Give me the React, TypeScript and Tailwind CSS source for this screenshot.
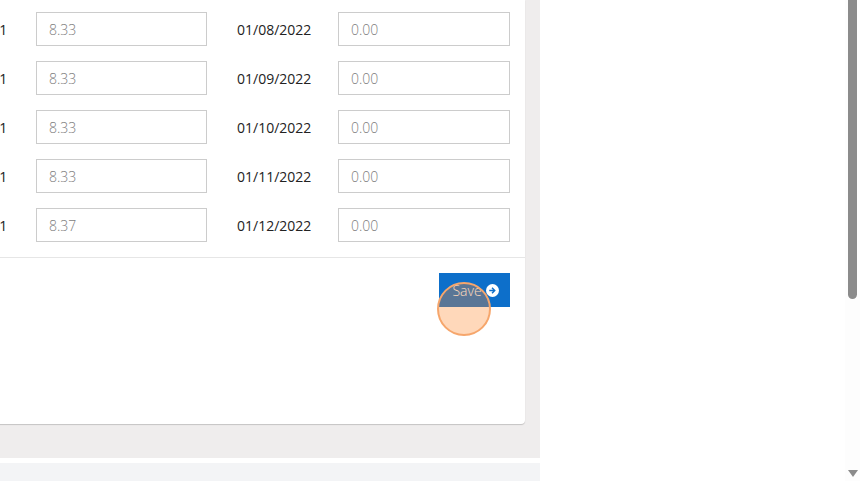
import React from 'react';

const rows = [
  { a: '01/08/2021', va: '8.33', b: '01/08/2022', vb: '0.00' },
  { a: '01/09/2021', va: '8.33', b: '01/09/2022', vb: '0.00' },
  { a: '01/10/2021', va: '8.33', b: '01/10/2022', vb: '0.00' },
  { a: '01/11/2021', va: '8.33', b: '01/11/2022', vb: '0.00' },
  { a: '01/12/2021', va: '8.37', b: '01/12/2022', vb: '0.00' },
];

function ArrowCircle() {
  return (
    <svg width="13" height="13" viewBox="0 0 16 16" className="ml-[4px]">
      <circle cx="8" cy="8" r="8" fill="#ffffff" />
      <path d="M4 7h4.6L6.8 5.2 8 4l4 4-4 4-1.2-1.2L8.6 9H4z" fill="#0d6fca" />
    </svg>
  );
}

export default function App() {
  return (
    <div
      className="w-[860px] h-[481px] overflow-hidden flex bg-white text-[14px]"
      style={{ fontFamily: '"Open Sans", "Liberation Sans", sans-serif' }}
    >
      <div className="w-[540px] h-full flex flex-col bg-[#efeded] overflow-hidden">
        <div className="w-[592px] -ml-[67px] h-[424px] shrink-0 bg-white rounded-br-[4px] shadow-[0_1px_1px_rgba(0,0,0,0.18)] flex flex-col relative">
          <div className="flex flex-col gap-[15px] pt-[12px] pr-[15px]">
            {rows.map((r) => (
              <div key={r.b} className="flex items-center h-[34px]">
                <span className="w-[103px] text-[#222]">{r.a}</span>
                <div className="w-[171px] h-[34px] border border-[#cccccc] flex items-center pl-[12px] text-[#7d7d7d] font-light">
                  {r.va}
                </div>
                <div className="w-[30px]" />
                <span className="w-[101px] text-[#222]">{r.b}</span>
                <div className="w-[172px] h-[34px] border border-[#cccccc] flex items-center pl-[12px] text-[#7d7d7d] font-light">
                  {r.vb}
                </div>
              </div>
            ))}
          </div>
          <div className="mt-[15px] h-px bg-[#e6e6e6]" />
          <div className="flex justify-end pr-[15px] pt-[15px]">
            <button className="w-[71px] h-[34px] bg-[#0d6fca] text-white font-light flex items-center justify-center pl-[2px]">
              Save
              <ArrowCircle />
            </button>
          </div>
          <div className="absolute left-[504px] top-[282px] w-[54px] h-[54px] rounded-full border-2 border-[#f6a66c] bg-[rgba(255,134,40,0.32)]" />
        </div>
        <div className="h-[34px] shrink-0" />
        <div className="h-[5px] shrink-0 bg-white" />
        <div className="flex-1 bg-[#f3f4f6]" />
      </div>
      <div className="flex-1 flex justify-end">
        <div className="w-[15px] h-full bg-[#fdfdfd] flex flex-col items-center">
          <div className="w-[9px] h-[299px] bg-[#8b8b8b] rounded-b-full" />
          <div className="flex-1" />
          <div className="mb-[4px] w-0 h-0 border-l-[5px] border-r-[5px] border-t-[7px] border-l-transparent border-r-transparent border-t-[#8b8b8b]" />
        </div>
      </div>
    </div>
  );
}
